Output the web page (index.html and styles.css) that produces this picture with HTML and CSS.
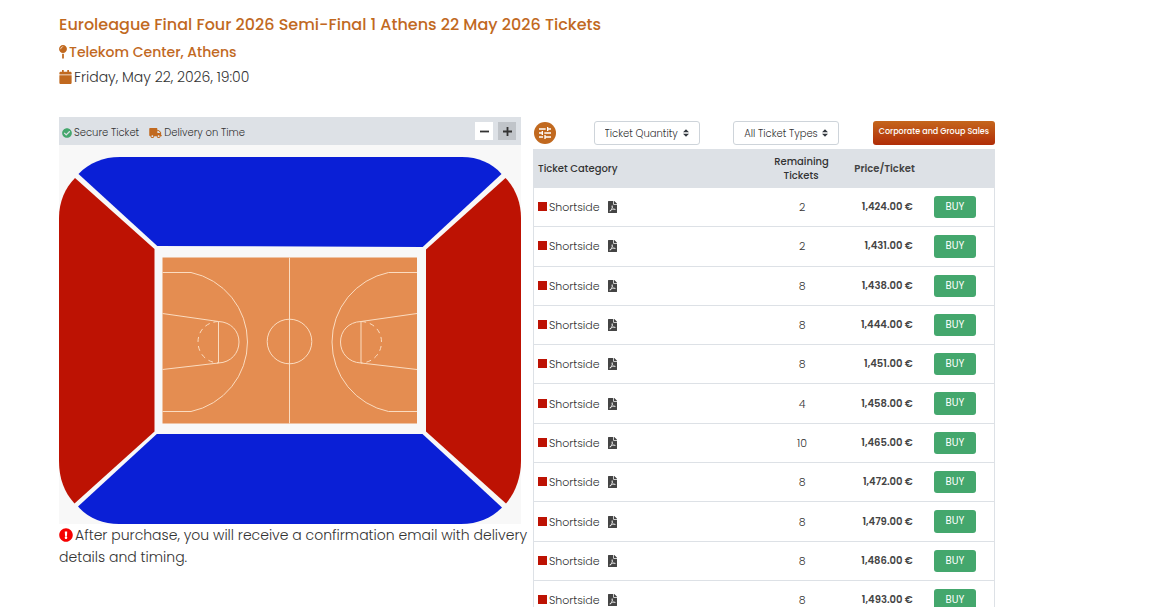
FILE: index.html
```html
<!DOCTYPE html>
<html lang="en">
<head>
    <meta charset="UTF-8">
    <meta name="viewport" content="width=device-width, initial-scale=1.0">
    <title>Euroleague Final Four 2026 Semi-Final 1 Athens 22 May 2026 Tickets</title>
    <link rel="stylesheet" href="styles.css">
</head>
<body>
    <!-- Icon sprite -->
    <svg class="sprite" aria-hidden="true">
        <symbol id="icon-pin" viewBox="0 0 288 512"><path d="M112 316.94v156.69l22.02 33.02c4.75 7.12 15.22 7.12 19.97 0L176 473.63v-156.69c-10.39 1.92-21.06 3.06-32 3.06s-21.61-1.14-32-3.06zM144 0C64.47 0 0 64.47 0 144s64.47 144 144 144 144-64.47 144-144S223.53 0 144 0zm0 76c-37.5 0-68 30.5-68 68 0 6.62-5.38 12-12 12s-12-5.38-12-12c0-50.73 41.28-92 92-92 6.62 0 12 5.38 12 12s-5.38 12-12 12z"/></symbol>
        <symbol id="icon-calendar" viewBox="0 0 448 512"><path d="M12 192h424c6.6 0 12 5.4 12 12v260c0 26.5-21.5 48-48 48H48c-26.5 0-48-21.5-48-48V204c0-6.6 5.4-12 12-12zm436-44v-36c0-26.5-21.5-48-48-48h-48V12c0-6.6-5.4-12-12-12h-40c-6.6 0-12 5.4-12 12v52H160V12c0-6.6-5.4-12-12-12h-40c-6.6 0-12 5.4-12 12v52H48C21.5 64 0 85.5 0 112v36c0 6.6 5.4 12 12 12h424c6.6 0 12-5.4 12-12z"/></symbol>
        <symbol id="icon-check" viewBox="0 0 512 512"><path d="M504 256c0 136.967-111.033 248-248 248S8 392.967 8 256 119.033 8 256 8s248 111.033 248 248zM227.314 387.314l184-184c6.248-6.248 6.248-16.379 0-22.627l-22.627-22.627c-6.248-6.249-16.379-6.249-22.628 0L216 308.118l-70.059-70.059c-6.248-6.248-16.379-6.248-22.628 0l-22.627 22.627c-6.248 6.248-6.248 16.379 0 22.627l104 104c6.249 6.249 16.379 6.249 22.628.001z"/></symbol>
        <symbol id="icon-truck" viewBox="0 0 640 512"><path d="M624 352h-16V243.9c0-12.7-5.1-24.9-14.1-33.9L494 110.1c-9-9-21.2-14.1-33.9-14.1H416V48c0-26.5-21.5-48-48-48H48C21.5 0 0 21.5 0 48v320c0 26.5 21.5 48 48 48h16c0 53 43 96 96 96s96-43 96-96h128c0 53 43 96 96 96s96-43 96-96h48c8.8 0 16-7.2 16-16v-32c0-8.8-7.2-16-16-16zM160 464c-26.5 0-48-21.5-48-48s21.5-48 48-48 48 21.5 48 48-21.5 48-48 48zm320 0c-26.5 0-48-21.5-48-48s21.5-48 48-48 48 21.5 48 48-21.5 48-48 48zm80-208H416V144h44.1l99.9 99.9V256z"/></symbol>
        <symbol id="icon-alert" viewBox="0 0 512 512"><path d="M504 256c0 136.997-111.043 248-248 248S8 392.997 8 256C8 119.083 119.043 8 256 8s248 111.083 248 248zm-248 50c-25.405 0-46 20.595-46 46s20.595 46 46 46 46-20.595 46-46-20.595-46-46-46zm-43.673-165.346l7.418 136c.347 6.364 5.609 11.346 11.982 11.346h48.546c6.373 0 11.635-4.982 11.982-11.346l7.418-136c.375-6.874-5.098-12.654-11.982-12.654h-63.383c-6.884 0-12.356 5.78-11.981 12.654z"/></symbol>
        <symbol id="icon-pdf" viewBox="0 0 384 512"><path d="M181.9 256.1c-5-16-4.9-46.9-2-46.9 8.4 0 7.6 36.9 2 46.9zm-1.7 47.2c-7.7 20.2-17.3 43.3-28.4 62.7 18.3-7 39-17.2 62.9-21.9-12.7-9.6-24.9-23.4-34.5-40.8zM86.1 428.1c0 .8 13.2-5.4 34.9-40.2-6.7 6.3-29.1 24.5-34.9 40.2zM248 160h136v328c0 13.3-10.7 24-24 24H24c-13.3 0-24-10.7-24-24V24C0 10.7 10.7 0 24 0h200v136c0 13.2 10.8 24 24 24zm-8 171.8c-20-12.2-33.3-29-42.7-53.8 4.5-18.5 11.6-46.6 6.2-64.2-4.7-29.4-42.4-26.5-47.8-6.8-5 18.3-.4 44.1 8.1 77-11.6 27.6-28.7 64.6-40.8 85.8-.1 0-.1.1-.2.1-27.1 13.9-73.6 44.5-54.5 68 5.6 6.9 16 10 21.5 10 17.9 0 35.7-18 61.1-61.8 25.8-8.5 54.1-19.1 79-23.2 21.7 11.8 47.1 19.5 64 19.5 29.2 0 31.2-32 19.7-43.4-13.9-13.6-54.3-9.7-73.6-7.2zM377 105L279 7c-4.5-4.5-10.6-7-17-7h-6v128h128v-6.1c0-6.3-2.5-12.4-7-16.9zm-74.1 255.3c4.1-2.7-2.5-11.9-42.8-9 37.1 15.8 42.8 9 42.8 9z"/></symbol>
        <symbol id="icon-tune" viewBox="0 0 24 24"><path d="M3 17v2h6v-2H3zM3 5v2h10V5H3zm10 16v-2h8v-2h-8v-2h-2v6h2zM7 9v2H3v2h4v2h2V9H7zm14 4v-2H11v2h10zm-6-4h2V7h4V5h-4V3h-2v6z"/></symbol>
    </svg>

    <main class="page">
        <header class="event-header">
            <h1>Euroleague Final Four 2026 Semi-Final 1 Athens 22 May 2026 Tickets</h1>
            <h2><svg class="icon icon-pin"><use href="#icon-pin"/></svg>Telekom Center, Athens</h2>
            <p class="event-date"><svg class="icon icon-calendar"><use href="#icon-calendar"/></svg>Friday, May 22, 2026, 19:00</p>
        </header>

        <div class="columns">
            <section class="venue">
                <div class="map-bar">
                    <span class="perk"><svg class="icon icon-check"><use href="#icon-check"/></svg>Secure Ticket</span>
                    <span class="perk"><svg class="icon icon-truck"><use href="#icon-truck"/></svg>Delivery on Time</span>
                    <div class="zoom-buttons">
                        <button type="button" class="zoom-out" aria-label="Zoom out"><svg viewBox="0 0 10 10"><path d="M0 5h10"/></svg></button>
                        <button type="button" class="zoom-in" aria-label="Zoom in"><svg viewBox="0 0 10 10"><path d="M0 5h10M5 0v10"/></svg></button>
                    </div>
                </div>

                <svg class="seat-map" viewBox="0 0 462 379" role="img" aria-label="Venue map">
                    <!-- Longside blocks -->
                    <path class="longside" d="M19.5 29C30 18 44 12 61 12H403C419 12 433 18 442.5 29L363.7 102L98.3 101Z"/>
                    <path class="longside" d="M97.8 289H363.5L443 362.5C433 373 419 379 402 379H60C44 379 29 373 19 361.5Z"/>
                    <!-- Shortside blocks -->
                    <path class="shortside" d="M16 33C6 43 0 57 0 73V316C0 333 5 347 15.5 358.5L95.5 286.5V104Z"/>
                    <path class="shortside" d="M446.5 33C456 43 462 57 462 73V316C462 333 456 348 447 358.5L367 286.5V104.5Z"/>
                    <!-- Court -->
                    <rect class="court" x="103.5" y="112.5" width="254.5" height="166"/>
                    <g class="court-lines">
                        <path d="M230.5 112.5V278.5"/>
                        <circle cx="230.5" cy="196.5" r="22.3"/>
                        <g id="half-court">
                            <path d="M103.5 127.5H132A71 71 0 0 1 132 266.5H103.5"/>
                            <path d="M103.5 168.5L159.5 176.5C172 177 180 186 180 197S172 217.5 159.5 218L103.5 224.5"/>
                            <path d="M159.5 176.5V218"/>
                            <path class="dashed" d="M159.5 176.5C147 177 139 186 139 197S147 217.5 159.5 218"/>
                        </g>
                        <use href="#half-court" transform="translate(461.5 0) scale(-1 1)"/>
                    </g>
                </svg>

                <p class="notice"><svg class="icon icon-alert"><use href="#icon-alert"/></svg>After purchase, you will receive a confirmation email with delivery details and timing.</p>
            </section>

            <section class="tickets">
                <div class="filters">
                    <button type="button" class="filter-button" aria-label="Filters"><svg class="icon-tune"><use href="#icon-tune"/></svg></button>
                    <select class="quantity" aria-label="Ticket Quantity">
                        <option>Ticket Quantity</option>
                    </select>
                    <select class="types" aria-label="Ticket Types">
                        <option>All Ticket Types</option>
                    </select>
                    <a href="#" class="group-sales">Corporate and Group Sales</a>
                </div>

                <table class="ticket-table">
                    <thead>
                        <tr>
                            <th class="category">Ticket Category</th>
                            <th class="remaining">Remaining Tickets</th>
                            <th class="price">Price/Ticket</th>
                            <th class="action"></th>
                        </tr>
                    </thead>
                    <tbody id="ticket-rows"></tbody>
                </table>
            </section>
        </div>
    </main>

    <script>
        const tickets = [
            { remaining: 2, price: '1,424.00' },
            { remaining: 2, price: '1,431.00' },
            { remaining: 8, price: '1,438.00' },
            { remaining: 8, price: '1,444.00' },
            { remaining: 8, price: '1,451.00' },
            { remaining: 4, price: '1,458.00' },
            { remaining: 10, price: '1,465.00' },
            { remaining: 8, price: '1,472.00' },
            { remaining: 8, price: '1,479.00' },
            { remaining: 8, price: '1,486.00' },
            { remaining: 8, price: '1,493.00' }
        ];

        document.getElementById('ticket-rows').innerHTML = tickets.map(ticket => `
            <tr>
                <td class="category"><span class="swatch"></span>Shortside<svg class="icon-pdf"><use href="#icon-pdf"/></svg></td>
                <td class="remaining">${ticket.remaining}</td>
                <td class="price">${ticket.price} €</td>
                <td class="action"><button type="button" class="buy">BUY</button></td>
            </tr>
        `).join('');
    </script>
</body>
</html>
```

FILE: styles.css
```css
* {
    box-sizing: border-box;
}

body {
    margin: 0;
    background-color: #fff;
    color: #333;
    font-family: Poppins, Inter, 'Open Sans', sans-serif;
    font-size: 14px;
    font-weight: 300;
    line-height: 22px;
}

button,
select {
    font-family: inherit;
}

.sprite {
    display: none;
}

.icon {
    fill: #c1691f;
    height: 14px;
    vertical-align: -2px;
}

.page {
    padding: 13px 163px 0 59px;
}

/* Event header */
.event-header {
    margin-bottom: 28px;
}

h1,
h2 {
    margin: 0;
    color: #c1691f;
    font-weight: 500;
}

h1 {
    font-size: 16px;
    line-height: 24px;
}

h2 {
    margin-top: 3px;
    font-size: 14px;
    line-height: 24px;
}

.event-date {
    margin: 2px 0 0;
    line-height: 23px;
}

.icon-pin {
    width: 8px;
    margin-right: 2px;
}

.icon-calendar {
    width: 13px;
    margin-right: 2px;
}

.columns {
    display: grid;
    grid-template-columns: 1fr 1fr;
    gap: 12px;
    align-items: start;
}

/* Venue map */
.map-bar {
    display: flex;
    align-items: center;
    gap: 10px;
    height: 28px;
    padding: 0 5px 0 3px;
    background-color: #dde1e6;
    font-size: 10px;
}

.perk {
    display: flex;
    align-items: center;
    gap: 2px;
    padding-top: 3px;
}

.icon-check {
    width: 10px;
    height: 10px;
    fill: #44a76d;
}

.icon-truck {
    width: 13px;
    height: 10px;
}

.zoom-buttons {
    display: flex;
    gap: 5px;
    margin-left: auto;
}

.zoom-buttons button {
    display: flex;
    align-items: center;
    justify-content: center;
    width: 18px;
    height: 18px;
    padding: 0;
    border: none;
    background-color: #fff;
    cursor: pointer;
}

.zoom-buttons .zoom-in {
    background-color: #c0c4c9;
}

.zoom-buttons svg {
    width: 9px;
    height: 9px;
    stroke: #333;
    stroke-width: 2;
}

.seat-map {
    display: block;
    width: 100%;
    background-color: #f8f8f8;
}

.longside {
    fill: #0a1fd6;
}

.shortside {
    fill: #bd1203;
}

.court {
    fill: #e48d51;
}

.court-lines {
    fill: none;
    stroke: #fbdcc0;
    stroke-width: 1;
}

.dashed {
    stroke-dasharray: 5 4;
}

/* The notice may run a little into the column gap */
.notice {
    margin: 0 -8px 0 0;
}

.icon-alert {
    width: 14px;
    margin-right: 2px;
    fill: #f50000;
}

/* Filters */
.filters {
    display: flex;
    align-items: center;
    justify-content: space-between;
    height: 32px;
}

.filter-button {
    display: flex;
    align-items: center;
    justify-content: center;
    width: 22px;
    height: 22px;
    margin: 0 4px 0 1px;
    padding: 0;
    border: none;
    border-radius: 50%;
    background-color: #c1691f;
    cursor: pointer;
}

.icon-tune {
    width: 16px;
    height: 16px;
    fill: #fff;
}

select {
    appearance: none;
    width: 106px;
    height: 24px;
    padding: 0 10px;
    border: 1px solid #ced4da;
    border-radius: 3px;
    background: #fff url("data:image/svg+xml,%3Csvg xmlns='http://www.w3.org/2000/svg' viewBox='0 0 4 5'%3E%3Cpath fill='%23343a40' d='M2 0L0 2h4zm0 5L0 3h4z'/%3E%3C/svg%3E") no-repeat right 10px center / 6px 8px;
    color: #333;
    font-size: 10px;
    font-weight: 300;
}

.group-sales {
    height: 24px;
    padding: 0 6px;
    border-radius: 3px;
    background: linear-gradient(#c5661c, #b02d08);
    color: #fff;
    font-size: 8px;
    font-weight: 500;
    text-decoration: none;
}

/* Ticket table */
.ticket-table {
    width: 100%;
    border: 1px solid #dde1e6;
    border-top: none;
    border-spacing: 0;
    table-layout: fixed;
    font-size: 11px;
    line-height: 14px;
}

.ticket-table td {
    padding: 8px 3px;
    border-bottom: 1px solid #dde1e6;
}

.ticket-table .category {
    width: 52%;
    padding-left: 4px;
    text-align: left;
}

.ticket-table .remaining {
    width: 13%;
    padding-right: 5px;
    text-align: center;
}

.ticket-table .price {
    width: 18%;
    color: #444;
    text-align: right;
    font-size: 10px;
    font-weight: 600;
}

.ticket-table thead th {
    height: 39px;
    padding-top: 0;
    padding-bottom: 0;
    background-color: #dde1e6;
    color: #333;
    font-size: 10px;
    font-weight: 500;
}

.swatch {
    display: inline-block;
    width: 9px;
    height: 9px;
    margin-right: 2px;
    background-color: #bd1203;
}

.icon-pdf {
    width: 9px;
    height: 12px;
    margin-left: 8px;
    fill: #444;
    vertical-align: -2px;
}

.buy {
    display: block;
    width: 42px;
    margin: 0 auto;
    padding: 4px 0;
    border: none;
    border-radius: 3px;
    background-color: #44a76d;
    color: #fff;
    font-size: 10px;
    line-height: 1.43;
    cursor: pointer;
}
```
